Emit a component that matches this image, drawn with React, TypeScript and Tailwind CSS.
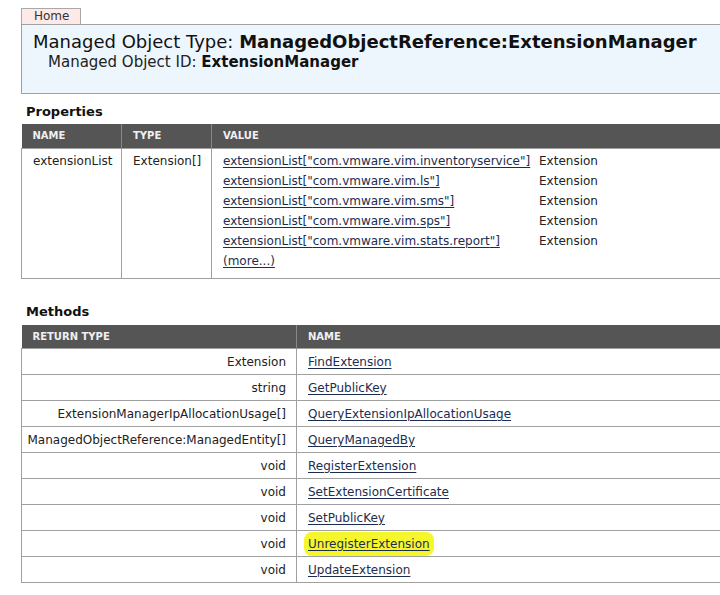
const extensions = [
  "com.vmware.vim.inventoryservice",
  "com.vmware.vim.ls",
  "com.vmware.vim.sms",
  "com.vmware.vim.sps",
  "com.vmware.vim.stats.report",
];

const methods = [
  ["Extension", "FindExtension"],
  ["string", "GetPublicKey"],
  ["ExtensionManagerIpAllocationUsage[]", "QueryExtensionIpAllocationUsage"],
  ["ManagedObjectReference:ManagedEntity[]", "QueryManagedBy"],
  ["void", "RegisterExtension"],
  ["void", "SetExtensionCertificate"],
  ["void", "SetPublicKey"],
  ["void", "UnregisterExtension"],
  ["void", "UpdateExtension"],
];

const linkCls = "text-[#1c2d4f] underline underline-offset-2 decoration-1";

export default function App() {
  return (
    <div className="w-[720px] h-[595px] overflow-hidden bg-white text-[12px] text-[#222] font-['DejaVu_Sans',Verdana,sans-serif]">
      <div className="pl-[21px] pt-[8px]">
        {/* tab + header */}
        <div className="w-[60px] h-[16px] border border-b-0 border-[#a8a8a8] bg-[#fde9e8] text-[12px] leading-[15px] pl-[12px] text-[#333]">
          Home
        </div>
        <div className="w-[740px] h-[70px] border border-[#a0a0a0] bg-[#eef6fd] pl-[11px] pt-[6px]">
          <div className="text-[18px] leading-[22px] text-[#111]">
            Managed Object Type: <b>ManagedObjectReference:ExtensionManager</b>
          </div>
          <div className="text-[15px] leading-[18px] pl-[15px] text-[#222]">
            Managed Object ID: <b className="text-[#111]">ExtensionManager</b>
          </div>
        </div>

        {/* properties */}
        <div className="mt-[9px] pl-[5px] font-bold text-[13px] leading-[18px] text-[#111]">Properties</div>
        <table className="mt-[3px] w-[760px] border-collapse">
          <thead>
            <tr className="bg-[#555555] text-[#f0f0f0] text-[10px] font-bold h-[24px]">
              <th className="w-[100px] text-left pl-[11px] border-r border-[#888] font-bold">NAME</th>
              <th className="w-[90px] text-left pl-[11px] border-r border-[#888] font-bold">TYPE</th>
              <th className="text-left pl-[11px] font-bold">VALUE</th>
            </tr>
          </thead>
          <tbody>
            <tr className="border border-[#a0a0a0] align-top">
              <td className="border-r border-[#a0a0a0] pl-[11px] pt-[2px] leading-[20px]">extensionList</td>
              <td className="border-r border-[#a0a0a0] pl-[11px] pt-[2px] leading-[20px]">Extension[]</td>
              <td className="pl-[11px] pt-[2px] pb-[7px] leading-[20px]">
                <div className="grid grid-cols-[316px_auto]">
                  {extensions.map((e) => (
                    <div key={e} className="contents">
                      <span className={linkCls}>extensionList["{e}"]</span>
                      <span>Extension</span>
                    </div>
                  ))}
                  <span className={linkCls}>(more...)</span>
                </div>
              </td>
            </tr>
          </tbody>
        </table>

        {/* methods */}
        <div className="mt-[24px] pl-[5px] font-bold text-[13px] leading-[18px] text-[#111]">Methods</div>
        <table className="mt-[4px] w-[760px] border-collapse">
          <thead>
            <tr className="bg-[#555555] text-[#f0f0f0] text-[10px] h-[24px]">
              <th className="w-[275px] text-left pl-[11px] border-r border-[#888] font-bold">RETURN TYPE</th>
              <th className="text-left pl-[11px] font-bold">NAME</th>
            </tr>
          </thead>
          <tbody>
            {methods.map(([ret, name]) => (
              <tr key={name} className="border border-[#a0a0a0] h-[26px]">
                <td className="border-r border-[#a0a0a0] text-right pr-[10px]">{ret}</td>
                <td className="pl-[11px]">
                  {name === "UnregisterExtension" ? (
                    <span className="bg-[#f6f62c] rounded-[8px] px-[4px] py-[5px] -ml-[4px]">
                      <span className={linkCls}>{name}</span>
                    </span>
                  ) : (
                    <span className={linkCls}>{name}</span>
                  )}
                </td>
              </tr>
            ))}
          </tbody>
        </table>
      </div>
    </div>
  );
}
